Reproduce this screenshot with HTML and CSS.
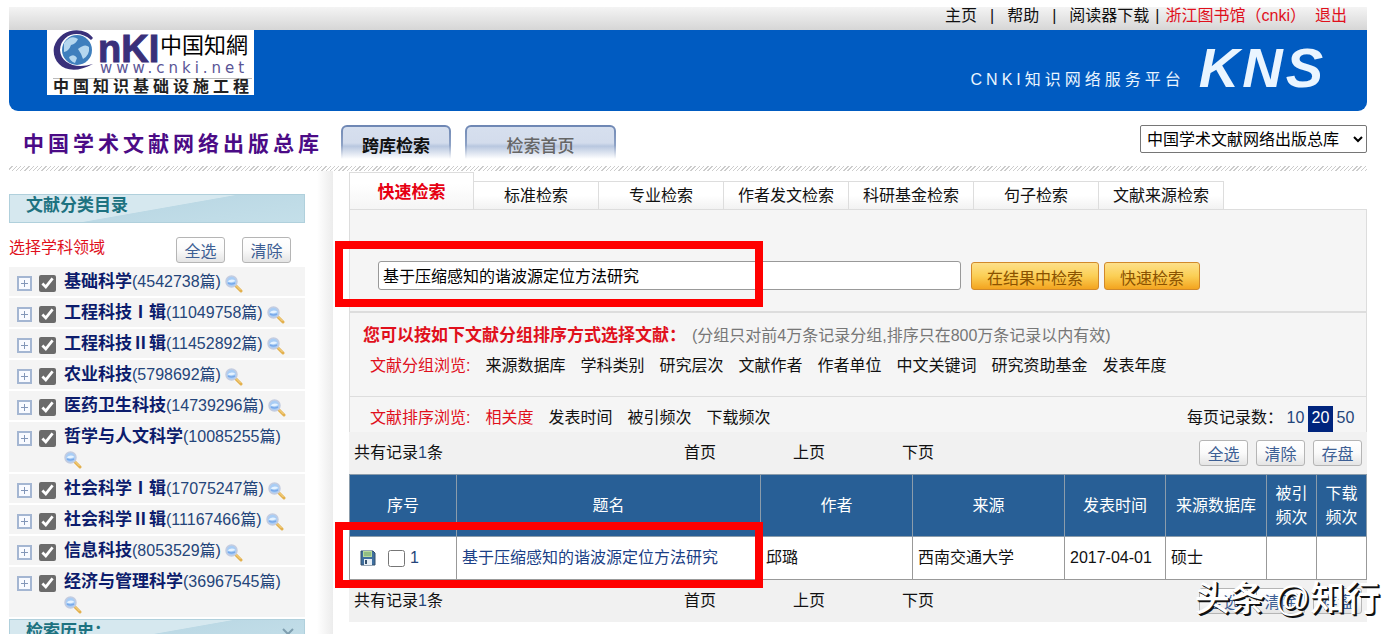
FILE: index.html
```html
<!DOCTYPE html>
<html lang="zh-CN">
<head>
    <meta charset="UTF-8">
    <meta name="viewport" content="width=device-width, initial-scale=1.0">
    <title>中国学术文献网络出版总库</title>
    <link rel="stylesheet" href="styles.css">
</head>
<body>
    <svg class="defs" width="0" height="0" aria-hidden="true">
        <symbol id="lupa" viewBox="0 0 18 18">
            <path d="M10.500 10.500 L16 16" stroke="#e3b04d" stroke-width="3" stroke-linecap="round"/>
            <path d="M10 9.500 L15.500 15" stroke="#f8dc94" stroke-width="1"/>
            <circle cx="6.500" cy="6.500" r="5.500" fill="#a9cdf5" stroke="#c3cce0" stroke-width="1.500"/>
            <path d="M2.500 6.500 Q6.500 3 10.500 6 Q7 8 2.500 6.500Z" fill="#e6f3ff"/>
            <path d="M3 8 Q6.500 10 10 8" stroke="#78a9ea" stroke-width="1.500" fill="none"/>
        </symbol>
    </svg>

    <!-- Cabecera -->
    <header>
        <nav class="topbar">
            <a href="#">主页</a><span>|</span>
            <a href="#">帮助</a><span>|</span>
            <a href="#">阅读器下载</a><span class="tight">|</span>
            <a class="red" href="#">浙江图书馆（cnki）</a>
            <a class="red exit" href="#">退出</a>
        </nav>
        <div class="banner">
            <svg class="logo" width="207" height="65" viewBox="0 0 207 65" role="img" aria-label="CNKI 中国知网">
                <rect width="207" height="65" fill="#fff"/>
                <circle cx="30" cy="20" r="15" fill="#3f7fbd"/>
                <path d="M17 13 Q24 4 31 9 Q29 14 24 15 Q22 21 17 22Z M31 19 Q38 13 42 17 Q43 25 36 29 Q34 23 31 19Z M22 27 Q27 23 30 28 L28 33 Q23 31 22 27Z" fill="#b5d7ef"/>
                <path d="M46 8 C38 -4 13 -3 7 17 C4 34 21 48 46 34 C29 39 14 34 13 20 C14 4 32 -1 44 10Z" fill="#39307a"/>
                <text class="logo-big" x="51" y="32">nKI</text>
                <text class="logo-cn" x="113" y="23">中国知網</text>
                <text class="logo-url" x="53" y="43">www.cnki.net</text>
                <path d="M6 48.500H205" stroke="#bbb"/>
                <text class="logo-sub" x="6" y="62">中国知识基础设施工程</text>
            </svg>
            <div class="platform">CNKI知识网络服务平台</div>
            <div class="kns">KNS</div>
        </div>
        <div class="titlebar">
            <h1>中国学术文献网络出版总库</h1>
            <button class="big-button">跨库检索</button>
            <button class="big-button home">检索首页</button>
            <select aria-label="数据库">
                <option>中国学术文献网络出版总库</option>
            </select>
        </div>
        <div class="hatch"></div>
    </header>

    <div class="columns">
        <!-- Columna izquierda -->
        <aside>
            <h2>文献分类目录</h2>
            <div class="choose">
                <span class="red">选择学科领域</span>
                <button class="small-button">全选</button>
                <button class="small-button">清除</button>
            </div>
            <ul class="tree">
                <li><button class="plus" aria-label="展开"></button><input type="checkbox" id="c1" checked><label for="c1"><b>基础科学</b>(4542738篇) <svg><use href="#lupa"/></svg></label></li>
                <li><button class="plus" aria-label="展开"></button><input type="checkbox" id="c2" checked><label for="c2"><b>工程科技Ⅰ辑</b>(11049758篇) <svg><use href="#lupa"/></svg></label></li>
                <li><button class="plus" aria-label="展开"></button><input type="checkbox" id="c3" checked><label for="c3"><b>工程科技Ⅱ辑</b>(11452892篇) <svg><use href="#lupa"/></svg></label></li>
                <li><button class="plus" aria-label="展开"></button><input type="checkbox" id="c4" checked><label for="c4"><b>农业科技</b>(5798692篇) <svg><use href="#lupa"/></svg></label></li>
                <li><button class="plus" aria-label="展开"></button><input type="checkbox" id="c5" checked><label for="c5"><b>医药卫生科技</b>(14739296篇) <svg><use href="#lupa"/></svg></label></li>
                <li><button class="plus" aria-label="展开"></button><input type="checkbox" id="c6" checked><label for="c6"><b>哲学与人文科学</b>(10085255篇) <svg><use href="#lupa"/></svg></label></li>
                <li><button class="plus" aria-label="展开"></button><input type="checkbox" id="c7" checked><label for="c7"><b>社会科学Ⅰ辑</b>(17075247篇) <svg><use href="#lupa"/></svg></label></li>
                <li><button class="plus" aria-label="展开"></button><input type="checkbox" id="c8" checked><label for="c8"><b>社会科学Ⅱ辑</b>(11167466篇) <svg><use href="#lupa"/></svg></label></li>
                <li><button class="plus" aria-label="展开"></button><input type="checkbox" id="c9" checked><label for="c9"><b>信息科技</b>(8053529篇) <svg><use href="#lupa"/></svg></label></li>
                <li><button class="plus" aria-label="展开"></button><input type="checkbox" id="c10" checked><label for="c10"><b>经济与管理科学</b>(36967545篇) <svg><use href="#lupa"/></svg></label></li>
            </ul>
            <h2 class="history">检索历史：
                <svg width="12" height="12" viewBox="0 0 12 12"><path d="M1 1L11 11M11 1L1 11" stroke="#7f9fb0" stroke-width="2"/></svg>
            </h2>
        </aside>
        <div class="shade"></div>

        <!-- Contenido -->
        <main>
            <nav class="tabs">
                <a class="active" href="#">快速检索</a>
                <a href="#">标准检索</a>
                <a href="#">专业检索</a>
                <a href="#">作者发文检索</a>
                <a href="#">科研基金检索</a>
                <a href="#">句子检索</a>
                <a href="#">文献来源检索</a>
            </nav>
            <form class="search">
                <input type="text" aria-label="检索词" value="基于压缩感知的谐波源定位方法研究">
                <button type="button" class="gold">在结果中检索</button>
                <button type="button" class="gold">快速检索</button>
                <div class="mark"></div>
            </form>
            <section class="groups">
                <p><b class="red">您可以按如下文献分组排序方式选择文献：</b><span class="note">(分组只对前4万条记录分组,排序只在800万条记录以内有效)</span></p>
                <div class="links">
                    <span class="red">文献分组浏览:</span>
                    <a href="#">来源数据库</a>
                    <a href="#">学科类别</a>
                    <a href="#">研究层次</a>
                    <a href="#">文献作者</a>
                    <a href="#">作者单位</a>
                    <a href="#">中文关键词</a>
                    <a href="#">研究资助基金</a>
                    <a href="#">发表年度</a>
                </div>
            </section>
            <section class="sort">
                <div class="links">
                    <span class="red">文献排序浏览:</span>
                    <a class="red" href="#">相关度</a>
                    <a href="#">发表时间</a>
                    <a href="#">被引频次</a>
                    <a href="#">下载频次</a>
                </div>
                <div class="per-page">每页记录数：<a href="#">10</a><a class="current" href="#">20</a><a href="#">50</a></div>
            </section>
            <div class="pager">
                <span class="total">共有记录<i>1</i>条</span>
                <span>首页</span><span>上页</span><span>下页</span>
                <div class="actions">
                    <button class="small-button">全选</button>
                    <button class="small-button">清除</button>
                    <button class="small-button">存盘</button>
                </div>
            </div>
            <div class="results">
                <table>
                    <thead>
                        <tr>
                            <th class="col-num">序号</th>
                            <th>题名</th>
                            <th class="col-author">作者</th>
                            <th class="col-author">来源</th>
                            <th class="col-date">发表时间</th>
                            <th class="col-date">来源数据库</th>
                            <th class="col-count">被引频次</th>
                            <th class="col-count">下载频次</th>
                        </tr>
                    </thead>
                    <tbody>
                        <tr>
                            <td>
                                <div class="num">
                                    <svg width="16" height="16" viewBox="0 0 16 16">
                                        <path d="M1 1H13L15 3V15H1Z" fill="#3f6f9f" stroke="#35516d"/>
                                        <rect x="3" y="1" width="9" height="6" fill="#b9dc9a"/>
                                        <path d="M4 3H11M4 5H11" stroke="#6a9e6e"/>
                                        <rect x="4" y="9" width="8" height="6" fill="#e6eef5"/>
                                        <rect x="5" y="10" width="2" height="4" fill="#35516d"/>
                                    </svg>
                                    <input type="checkbox" id="r1"><label for="r1">1</label>
                                </div>
                            </td>
                            <td><a href="#">基于压缩感知的谐波源定位方法研究</a></td>
                            <td>邱璐</td>
                            <td>西南交通大学</td>
                            <td>2017-04-01</td>
                            <td>硕士</td>
                            <td></td>
                            <td></td>
                        </tr>
                    </tbody>
                </table>
                <div class="mark"></div>
            </div>
            <div class="pager bottom">
                <span class="total">共有记录<i>1</i>条</span>
                <span>首页</span><span>上页</span><span>下页</span>
                <div class="actions">
                    <button class="small-button">全选</button>
                    <button class="small-button">清除</button>
                    <button class="small-button">存盘</button>
                </div>
                <div class="watermark">头条 @知行</div>
            </div>
        </main>
    </div>
</body>
</html>
```

FILE: styles.css
```css
* {
    box-sizing: border-box;
}
html {
    scrollbar-width: none;
}
body {
    margin: 0;
    padding: 7px 31px 0 9px;
    background: #fff;
    color: #111;
    font-family: "Liberation Sans", "Noto Sans CJK SC", sans-serif;
    font-size: 16px;
    line-height: 24px;
}
a {
    color: inherit;
    text-decoration: none;
}
button, input, select {
    font-family: inherit;
    font-size: 16px;
}
.defs {
    display: block;
}
.red {
    color: #e0101c;
}

/* Cabecera */
.topbar {
    display: flex;
    justify-content: flex-end;
    gap: 13px;
    height: 23px;
    padding-right: 20px;
    line-height: 17px;
    background: linear-gradient(#f4f4f4, #d6d6d6);
}
.topbar .tight {
    margin: 0 -7px;
}
.topbar .exit {
    margin-left: -4px;
}
.banner {
    display: flex;
    align-items: flex-start;
    height: 81px;
    padding: 0 41px 0 38px;
    background: #005bc1;
    border-radius: 0 0 9px 9px;
    color: #eaf5ff;
}
.logo-big {
    font-size: 38px;
    font-weight: bold;
    fill: #39307a;
    stroke: #39307a;
    stroke-width: 1px;
}
.logo-cn {
    font-size: 22px;
    font-family: "Noto Sans CJK SC", sans-serif;
}
.logo-url {
    font-family: "DejaVu Sans", sans-serif;
    font-size: 15px;
    letter-spacing: 4px;
    fill: #5a5596;
}
.logo-sub {
    font-size: 16px;
    font-weight: bold;
    letter-spacing: 4px;
    fill: #222;
}
.platform {
    margin-left: auto;
    padding-top: 38px;
    letter-spacing: 4px;
}
.kns {
    margin-left: 14px;
    padding-top: 8px;
    font-size: 56px;
    line-height: 60px;
    font-weight: bold;
    font-style: italic;
    letter-spacing: 3px;
}
.titlebar {
    display: flex;
    align-items: flex-start;
    height: 55px;
    padding: 14px 0 0 14px;
}
h1 {
    width: 318px;
    margin: 0;
    padding-top: 3px;
    font-size: 21px;
    line-height: 32px;
    letter-spacing: 4px;
    color: #4b0b86;
}
.big-button {
    width: 110px;
    height: 34px;
    padding: 3px 0 0;
    border: 2px solid transparent;
    border-bottom: 0;
    border-radius: 6px 6px 0 0;
    background: linear-gradient(#d6dfee, #d3dcec 50%, #b8c7df 60%, #fff) padding-box,
                linear-gradient(#6d86b3, #8fa3c6 60%, #fff) border-box;
    font-size: 17px;
    font-weight: bold;
    color: #111;
}
.big-button.home {
    width: 151px;
    margin-left: 14px;
    font-weight: 500;
    color: #666;
}
select {
    width: 227px;
    height: 28px;
    margin-left: auto;
    padding-left: 2px;
    border: 1px solid #767676;
    border-radius: 2px;
    background: #fff;
    color: #000;
}
.hatch {
    height: 5px;
    background: repeating-linear-gradient(135deg, #fff 0, #fff 2px, #ccc 2px, #ccc 3px);
}

/* Columna izquierda */
.columns {
    display: flex;
    align-items: stretch;
}
aside {
    flex: none;
    width: 296px;
    padding-top: 23px;
}
h2 {
    height: 29px;
    margin: 0;
    padding-left: 16px;
    border: 1px solid #b0d0dc;
    background: linear-gradient(170deg, #d6e8ef 50%, #bcd9e5 51%, #c4dfe9);
    font-size: 17px;
    line-height: 22px;
    color: #1d7280;
}
.history {
    display: flex;
    justify-content: space-between;
    padding-right: 10px;
    height: 28px;
    line-height: 24px;
}
.history svg {
    margin-top: 8px;
}
.choose {
    display: flex;
    align-items: center;
    gap: 17px;
    height: 44px;
    padding: 10px 14px 0 0;
}
.choose .red {
    margin-right: auto;
    margin-top: -4px;
}
.small-button {
    width: 49px;
    height: 26px;
    padding: 3px 0 0;
    border: 1px solid #b5b5b5;
    border-radius: 3px;
    background: linear-gradient(#fff, #fafafa 50%, #e4e4e4);
    line-height: 20px;
    color: #3d5f94;
}
.tree {
    margin: 0;
    padding: 0;
    list-style: none;
}
.tree li {
    display: flex;
    align-items: flex-start;
    padding: 4px 13px 4px 8px;
    margin-bottom: 2px;
    background: #f4f4f4;
    line-height: 21px;
    color: #24457a;
}
.tree b {
    font-size: 17px;
    color: #0c1c6c;
}
.tree label {
    flex: 1;
}
.tree label svg {
    width: 18px;
    height: 18px;
    margin-bottom: -6px;
    vertical-align: baseline;
}
.plus {
    width: 15px;
    height: 15px;
    margin: 5px 7px 0 0;
    padding: 0;
    border: 2px solid #a4b6d2;
    background: linear-gradient(#8296b8, #8296b8) center / 7px 1px no-repeat,
                linear-gradient(#8296b8, #8296b8) center / 1px 7px no-repeat, #f8faff;
}
.tree input {
    width: 17px;
    height: 17px;
    margin: 4px 8px 0 0;
    accent-color: #6b6b6b;
}
.shade {
    flex: none;
    width: 16px;
    margin: 0 16px 0 12px;
    background: linear-gradient(to right, #fff, #ececec);
}

/* Contenido */
main {
    flex: 1;
    min-width: 0;
}
.tabs {
    display: flex;
    align-items: flex-end;
    padding-top: 1px;
}
.tabs a {
    width: 125px;
    height: 28px;
    border: 1px solid #ddd;
    border-width: 1px 1px 0 0;
    background: linear-gradient(#fff 50%, #f2f2f2);
    line-height: 28px;
    text-align: center;
    color: #111;
}
.tabs .active {
    height: 37px;
    border-left-width: 1px;
    background: linear-gradient(#fff 30%, #f5f5f5);
    font-size: 17px;
    font-weight: bold;
    line-height: 40px;
    color: #e60012;
}
.search {
    position: relative;
    display: flex;
    align-items: center;
    gap: 5px;
    height: 102px;
    padding: 30px 0 0 28px;
    border: 1px solid #ddd;
    border-width: 1px 1px 0;
    background: #f5f5f5;
}
.search input {
    width: 59%;
    height: 29px;
    margin-right: 5px;
    padding: 0 4px 2px;
    border: 1px solid #999;
    border-radius: 3px;
    background: #fff;
    color: #000;
}
.gold {
    height: 28px;
    padding: 2px 15px 0;
    border: 1px solid #d1892b;
    border-radius: 3px;
    background: linear-gradient(#fde08a, #fbcf55 50%, #f3a41f);
    color: #8a5200;
}
.mark {
    position: absolute;
    z-index: 1;
    top: 31px;
    left: -15px;
    width: 428px;
    height: 66px;
    border: 8px solid #f00;
    pointer-events: none;
}
.groups {
    height: 86px;
    padding: 11px 13px 0;
    border: 1px solid #ddd;
    border-width: 2px 1px 1px;
    background: #f5f5f5;
}
.groups p {
    margin: 0 0 6px;
}
.groups b {
    font-size: 17px;
}
.note {
    margin-left: 6px;
    color: #777;
}
.links {
    display: flex;
    gap: 15px;
    padding-left: 7px;
}
.sort {
    display: flex;
    justify-content: space-between;
    height: 35px;
    padding: 9px 8px 0 13px;
    border: 1px solid #ddd;
    border-width: 0 1px;
    background: #f5f5f5;
}
.per-page {
    display: flex;
    color: #111;
}
.per-page a {
    width: 25px;
    text-align: center;
    color: #24457a;
}
.per-page .current {
    background: #00247d;
    color: #fff;
}
.pager {
    position: relative;
    display: flex;
    align-items: center;
    height: 42px;
    padding: 0 5px;
    background: #f1f1f1;
}
.pager span {
    width: 109px;
}
.pager .total {
    width: 330px;
}
.pager i {
    font-style: normal;
    color: #24457a;
}
.actions {
    display: flex;
    gap: 8px;
    margin-left: auto;
}
.results {
    position: relative;
}
.results .mark {
    top: 48px;
    left: -14px;
}
table {
    width: 100%;
    border-collapse: collapse;
    table-layout: fixed;
}
th {
    height: 62px;
    padding: 0 8px;
    border: 1px solid #8b9cab;
    background: #285f96;
    color: #fff;
    font-weight: normal;
}
td {
    height: 43px;
    padding: 0 5px;
    border: 1px solid #999;
    background: #fff;
}
td a {
    color: #1b3f86;
}
.col-num {
    width: 107px;
}
.col-author {
    width: 152px;
}
.col-date {
    width: 101px;
}
.col-count {
    width: 50px;
}
.num {
    display: flex;
    align-items: center;
    padding-left: 5px;
}
.num input {
    width: 17px;
    height: 17px;
    margin: 0 5px 0 12px;
}
.num label {
    color: #24457a;
}
.watermark {
    position: absolute;
    right: -13px;
    bottom: 3px;
    font-size: 35px;
    font-weight: 500;
    line-height: 40px;
    color: #fff;
    text-shadow: 1px 1px 0 #111, 2px 2px 0 #111;
    white-space: nowrap;
}
```
